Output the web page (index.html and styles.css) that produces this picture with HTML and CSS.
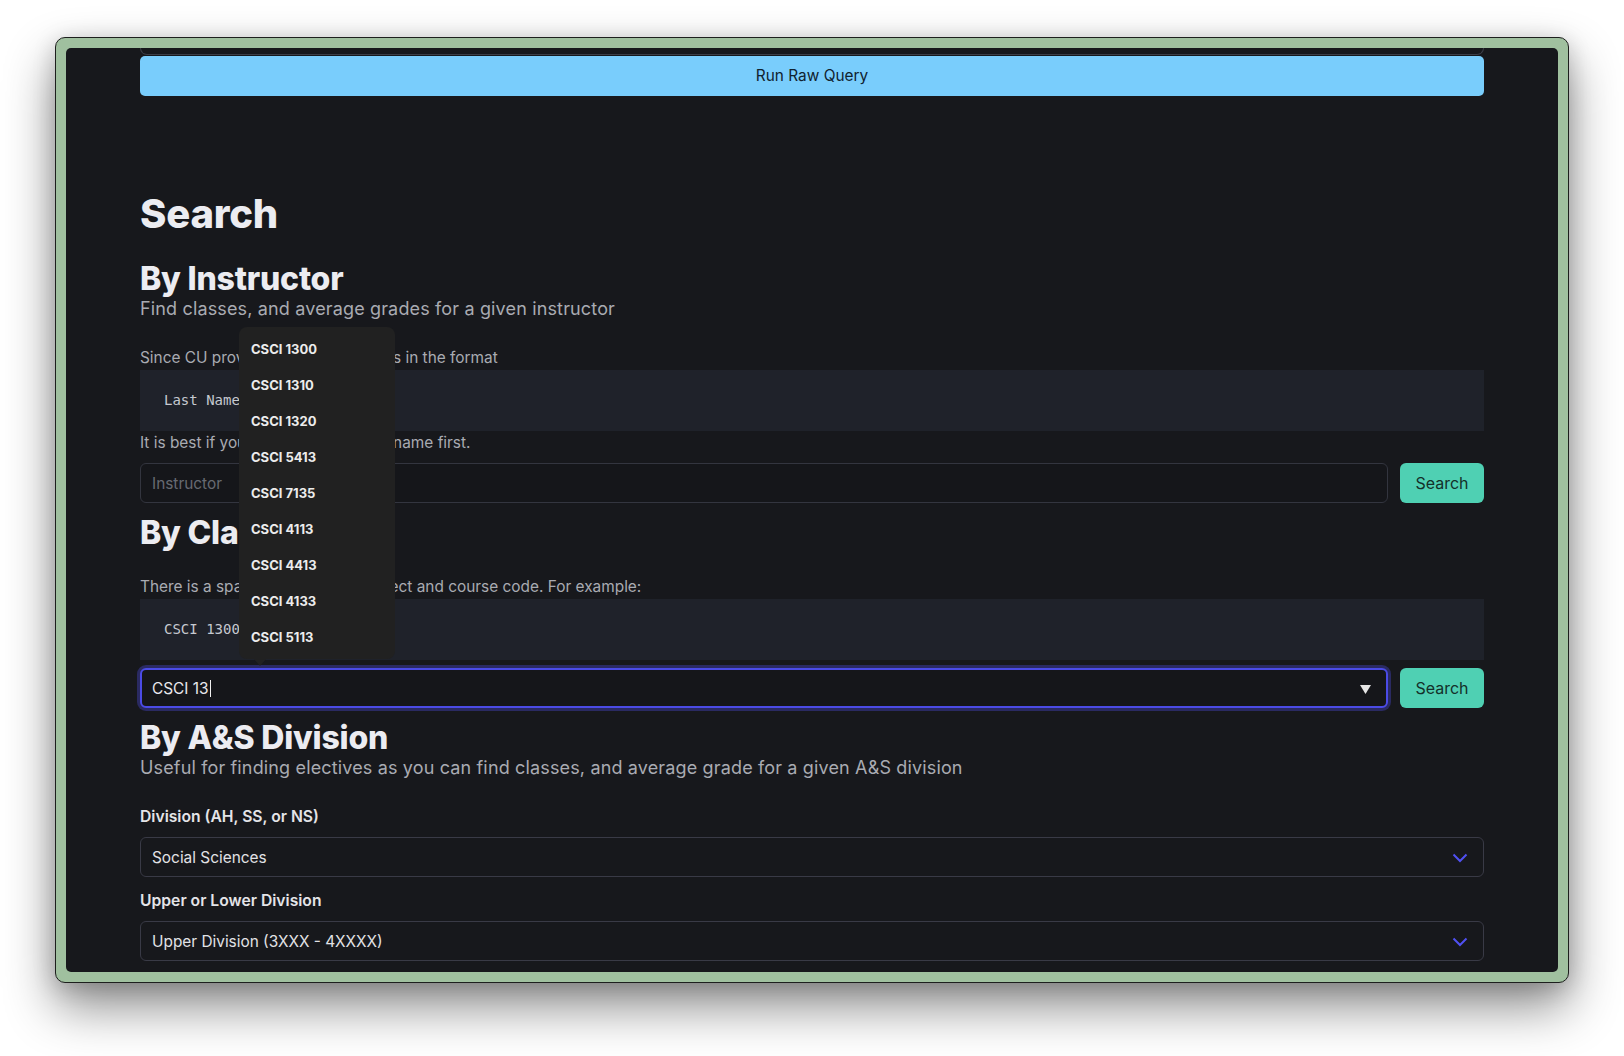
FILE: index.html
```html
<!DOCTYPE html>
<html lang="en">
<head>
<meta charset="utf-8">
<title>Search</title>
<link rel="stylesheet" href="styles.css">
</head>
<body>
<div class="window">
  <div class="screen">
    <div class="raw-tail"></div>
    <button class="run-btn">Run Raw Query</button>

    <h1 class="page-title">Search</h1>

    <section class="section section-instructor">
      <h2 class="section-title">By Instructor</h2>
      <p class="section-sub">Find classes, and average grades for a given instructor</p>
      <p class="desc desc-first">Since CU provides instructor names in the format</p>
      <pre class="code">Last Name, First Name</pre>
      <p class="desc">It is best if you search by their last name first.</p>
      <div class="row">
        <input class="field" type="text" placeholder="Instructor">
        <button class="search-btn">Search</button>
      </div>
    </section>

    <section class="section section-class">
      <h2 class="section-title">By Class</h2>
      <p class="desc desc-first-class">There is a space between the subject and course code. For example:</p>
      <pre class="code">CSCI 1300</pre>
      <div class="row row-class">
        <div class="field field-focus">
          <span class="field-value">CSCI 13</span><span class="caret"></span>
          <svg class="list-arrow" width="11" height="9" viewBox="0 0 11 9"><polygon points="0,0 11,0 5.5,9" fill="#e6e6e6"/></svg>
        </div>
        <button class="search-btn">Search</button>
        <div class="suggest">
          <div class="suggest-item">CSCI 1300</div>
          <div class="suggest-item">CSCI 1310</div>
          <div class="suggest-item">CSCI 1320</div>
          <div class="suggest-item">CSCI 5413</div>
          <div class="suggest-item">CSCI 7135</div>
          <div class="suggest-item">CSCI 4113</div>
          <div class="suggest-item">CSCI 4413</div>
          <div class="suggest-item">CSCI 4133</div>
          <div class="suggest-item">CSCI 5113</div>
          <span class="suggest-tip"></span>
        </div>
      </div>
    </section>

    <section class="section section-division">
      <h2 class="section-title">By A&amp;S Division</h2>
      <p class="section-sub">Useful for finding electives as you can find classes, and average grade for a given A&amp;S division</p>
      <div class="label label-first">Division (AH, SS, or NS)</div>
      <div class="select">
        <span>Social Sciences</span>
        <svg class="chev" width="16" height="10" viewBox="0 0 16 10"><path d="M1.5 1.5 L8 8 L14.5 1.5" fill="none" stroke="#5050f2" stroke-width="2"/></svg>
      </div>
      <div class="label">Upper or Lower Division</div>
      <div class="select">
        <span>Upper Division (3XXX - 4XXXX)</span>
        <svg class="chev" width="16" height="10" viewBox="0 0 16 10"><path d="M1.5 1.5 L8 8 L14.5 1.5" fill="none" stroke="#5050f2" stroke-width="2"/></svg>
      </div>
    </section>
  </div>
</div>
</body>
</html>
```
FILE: styles.css
```css
* { box-sizing: border-box; }

html, body {
  margin: 0;
  padding: 0;
  background: #ffffff;
}

body {
  padding: 37px 0 0 55px;
  font-family: Inter, "Noto Sans", "Liberation Sans", sans-serif;
  height: 1056px;
  overflow: hidden;
}

.window {
  width: 1514px;
  height: 946px;
  border: 1px solid #1d1f1d;
  border-radius: 10px;
  background: #a0c09f;
  padding: 10px;
  box-shadow: 0 24px 50px rgba(0, 0, 0, 0.45), 0 4px 22px rgba(0, 0, 0, 0.18);
}

.screen {
  height: 100%;
  background: #17181c;
  border-radius: 5px;
  overflow: hidden;
  padding: 0 74px;
}

.raw-tail {
  height: 7px;
  border: 1px solid #3b3d47;
  border-top: none;
  border-radius: 0 0 7px 7px;
}

.run-btn {
  display: block;
  width: 100%;
  height: 40px;
  margin-top: 1px;
  border: none;
  border-radius: 5px;
  background: #79cdfc;
  color: #10222f;
  font-family: Inter, "Noto Sans", sans-serif;
  font-size: 15.4px;
  line-height: 24px;
  padding: 0;
}

.page-title {
  margin: 94px 0 0;
  font-size: 40px;
  line-height: 48px;
  font-weight: 800;
  color: #ececf1;
  letter-spacing: -0.2px;
}

.section { position: relative; }
.section-instructor { margin-top: 25px; }
.section-class { margin-top: 14px; }
.section-division { margin-top: 14px; }

.section-title {
  margin: 0;
  font-size: 32px;
  line-height: 32px;
  font-weight: 800;
  color: #ececf1;
  letter-spacing: -0.2px;
}

.section-sub {
  margin: 0;
  font-size: 18px;
  line-height: 28px;
  letter-spacing: 0.15px;
  color: #a9abb2;
}

.desc {
  margin: 0;
  font-size: 15.4px;
  line-height: 24px;
  color: #a9abb2;
}
.desc-first { margin-top: 23px; }
.desc-first-class { margin-top: 26px; }

.code {
  margin: 0;
  height: 61px;
  padding: 20px 24px;
  background: #1f222a;
  color: #c6c9d0;
  font-family: "DejaVu Sans Mono", "Liberation Mono", monospace;
  font-size: 14px;
  line-height: 21px;
}

.row {
  display: flex;
  gap: 12px;
  margin-top: 8px;
  position: relative;
}

.field {
  flex: 1;
  height: 40px;
  border: 1px solid #33353f;
  border-radius: 6px;
  background: #15161a;
  padding: 0 11px;
  font-family: Inter, "Noto Sans", sans-serif;
  font-size: 15.4px;
  color: #e6e6ea;
  outline: none;
}
.field::placeholder { color: #676a72; }

.field-focus {
  display: flex;
  align-items: center;
  border: 2px solid #4b4be6;
  box-shadow: 0 0 0 3px #2a2a62;
  padding: 0 10px;
}
.field-value { color: #e8e8ec; }
.caret {
  display: inline-block;
  width: 1px;
  height: 17px;
  background: #f0f0f0;
  margin-left: 1px;
}
.list-arrow {
  margin-left: auto;
  margin-right: 5px;
  margin-top: 3px;
}

.search-btn {
  width: 84px;
  height: 40px;
  border: none;
  border-radius: 6px;
  background: #4fd0b3;
  color: #14302a;
  font-family: Inter, "Noto Sans", sans-serif;
  font-size: 16px;
  padding: 0;
}

.suggest {
  position: absolute;
  left: 99px;
  bottom: calc(100% + 9px);
  width: 156px;
  padding: 4px 0;
  background: #212121;
  border-radius: 8px;
  z-index: 5;
}
.suggest-item {
  height: 36px;
  line-height: 36px;
  padding-left: 12px;
  font-size: 13px;
  font-weight: 700;
  color: #ececec;
}
.suggest-tip {
  position: absolute;
  left: 15px;
  top: 100%;
  width: 0;
  height: 0;
  border-left: 6px solid transparent;
  border-right: 6px solid transparent;
  border-top: 7px solid #212121;
}

.label {
  margin-top: 12px;
  font-size: 15.7px;
  line-height: 24px;
  font-weight: 600;
  color: #e4e4e8;
}
.label-first { margin-top: 23px; }

.select {
  margin-top: 8px;
  height: 40px;
  border: 1px solid #393a46;
  border-radius: 6px;
  background: #17181c;
  padding: 0 15px 0 11px;
  display: flex;
  align-items: center;
  justify-content: space-between;
  font-size: 15.4px;
  color: #e2e2e6;
}
.chev { margin-top: 1px; }
```
